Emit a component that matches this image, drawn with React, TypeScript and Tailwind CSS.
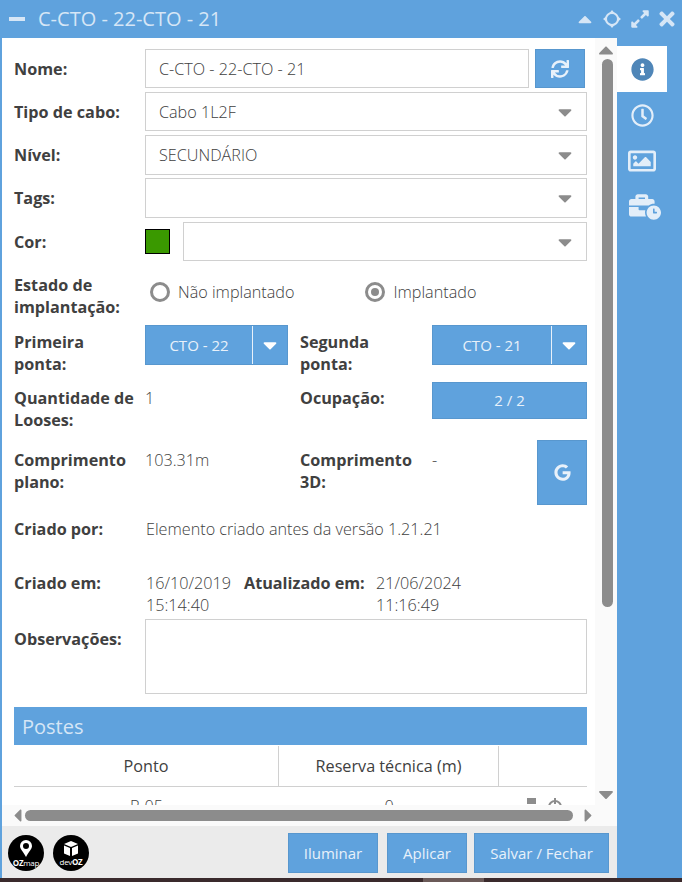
import React from "react";
import { FaBusinessTime, FaCaretDown, FaCaretLeft, FaCaretRight, FaCaretUp, FaExpandAlt, FaGoogle, FaInfoCircle, FaRegClock, FaRegImage, FaSync, FaTimes } from "react-icons/fa";

const Label = ({ children, className = "" }: { children: React.ReactNode; className?: string }) => (
  <div className={`text-[16.2px] leading-[22px] font-bold text-[#404040] ${className}`}>{children}</div>
);

const Value = ({ children, className = "" }: { children: React.ReactNode; className?: string }) => (
  <div className={`text-[16.2px] leading-[22px] font-light text-[#404040] ${className}`}>{children}</div>
);

const Field = ({ value, select, className = "" }: { value?: string; select?: boolean; className?: string }) => (
  <div className={`flex items-center border border-[#d0d0d0] pl-[13px] pr-[13px] ${className}`}>
    <span className="flex-1 pt-[1px] text-[16.2px] font-light text-[#404040]">{value}</span>
    {select && <FaCaretDown className="mr-[-3px] text-[22px] text-[#8c8c8c]" />}
  </div>
);

const SplitButton = ({ text, main, className = "" }: { text: string; main: string; className?: string }) => (
  <div className={`flex h-[40px] items-center border border-[#5897ce] bg-[#5fa2dd] text-[15px] text-[#e8f1fa] ${className}`}>
    <div className={`flex h-[38px] items-center justify-center border-r border-[#e8f1fa] ${main}`}>{text}</div>
    <div className="flex flex-1 items-center justify-center">
      <FaCaretDown className="text-[22px] text-white" />
    </div>
  </div>
);

const Radio = ({ label, checked, className = "" }: { label: string; checked?: boolean; className?: string }) => (
  <div className={`flex items-center gap-[8px] ${className}`}>
    <div className="flex h-[20px] w-[20px] items-center justify-center rounded-full border-[3px] border-[#8c8c8c]">
      {checked && <div className="h-[8px] w-[8px] rounded-full bg-[#8c8c8c]" />}
    </div>
    <span className="text-[16.2px] font-light text-[#404040]">{label}</span>
  </div>
);

const MoveIcon = () => (
  <svg viewBox="0 0 18 18" className="h-[18px] w-[18px]" fill="#d6e6f6">
    <circle cx="9" cy="9" r="6" fill="none" stroke="#d6e6f6" strokeWidth="2" />
    <path d="M9 0l2.500 3h-5zM9 18l2.500-3h-5zM0 9l3-2.500v5zM18 9l-3-2.500v5z" />
  </svg>
);

const Logo = ({ children, caption }: { children: React.ReactNode; caption: React.ReactNode }) => (
  <div className="flex h-[36px] w-[36px] flex-col items-center justify-center rounded-full bg-black text-white">
    {children}
    <span className="text-[8px] leading-[9px] tracking-[-0.3px]">{caption}</span>
  </div>
);

export default function App() {
  return (
    <div className="flex h-[882px] w-[682px] flex-col overflow-hidden bg-[#5fa2dd] font-['Open_Sans',sans-serif]">
      {/* title bar */}
      <div className="flex h-[38px] shrink-0 items-center pl-[9px] pr-[4px] text-[#d6e6f6]">
        <div className="h-[4px] w-[16px] bg-[#d6e6f6]" />
        <span className="ml-[13px] flex-1 text-[20px] font-normal">C-CTO - 22-CTO - 21</span>
        <FaCaretUp className="mr-[7px] text-[22px]" />
        <MoveIcon />
        <FaExpandAlt className="ml-[9px] text-[20px]" />
        <FaTimes className="ml-[6px] text-[22px]" />
      </div>

      <div className="flex min-h-0 flex-1">
        <div className="ml-[2px] flex w-[615px] flex-col">
          <div className="flex min-h-0 flex-1 bg-white">
            <div className="flex w-[593px] flex-col">
              <div className="h-[767px] overflow-hidden pl-[12px] pr-[8px] pt-[11px]">
                <div className="flex h-[39px] items-center">
                  <Label className="w-[131px]">Nome:</Label>
                  <Field value="C-CTO - 22-CTO - 21" className="h-[39px] w-[384px]" />
                  <div className="ml-[6px] flex h-[39px] w-[50px] items-center justify-center border border-[#5897ce] bg-[#5fa2dd]">
                    <FaSync className="text-[18px] text-[#e8f1fa]" />
                  </div>
                </div>
                <div className="mt-[4px] flex h-[39px] items-center">
                  <Label className="w-[131px]">Tipo de cabo:</Label>
                  <Field value="Cabo 1L2F" select className="h-[39px] flex-1" />
                </div>
                <div className="mt-[4px] flex h-[40px] items-center">
                  <Label className="w-[131px]">Nível:</Label>
                  <Field value="SECUNDÁRIO" select className="h-[40px] flex-1" />
                </div>
                <div className="mt-[3px] flex h-[40px] items-center">
                  <Label className="w-[131px]">Tags:</Label>
                  <Field select className="h-[40px] flex-1" />
                </div>
                <div className="mt-[4px] flex h-[39px] items-center">
                  <Label className="w-[131px]">Cor:</Label>
                  <div className="h-[25px] w-[25px] border border-black bg-[#3a9900]" />
                  <Field select className="ml-[13px] h-[39px] flex-1" />
                </div>

                <div className="mt-[13px] flex h-[44px]">
                  <Label className="w-[136px]">Estado de implantação:</Label>
                  <Radio label="Não implantado" className="h-[36px]" />
                  <Radio label="Implantado" checked className="ml-[71px] h-[36px]" />
                </div>

                <div className="mt-[7px] flex h-[46px]">
                  <Label className="w-[131px] pt-[6px]">Primeira<br />ponta:</Label>
                  <SplitButton text="CTO - 22" main="w-[107px]" className="w-[143px]" />
                  <Label className="ml-[12px] w-[132px] pt-[6px]">Segunda<br />ponta:</Label>
                  <SplitButton text="CTO - 21" main="w-[119px]" className="w-[155px]" />
                </div>

                <div className="mt-[11px] flex h-[48px]">
                  <Label className="w-[131px] pt-[5px]">Quantidade de Looses:</Label>
                  <Value className="w-[155px] pt-[5px]">1</Value>
                  <Label className="w-[132px] pt-[5px]">Ocupação:</Label>
                  <div className="flex h-[37px] w-[155px] items-center justify-center border border-[#5897ce] bg-[#5fa2dd] text-[15px] text-[#e8f1fa]">2 / 2</div>
                </div>

                <div className="mt-[10px] flex h-[65px]">
                  <div className="flex w-[286px] pt-[9px]">
                    <Label className="w-[131px]">Comprimento plano:</Label>
                    <Value>103.31m</Value>
                  </div>
                  <div className="flex w-[237px] pt-[9px]">
                    <Label className="w-[132px]">Comprimento<br />3D:</Label>
                    <Value>-</Value>
                  </div>
                  <div className="flex h-[65px] w-[50px] items-center justify-center border border-[#5897ce] bg-[#5fa2dd]">
                    <FaGoogle className="text-[17px] text-[#e8f1fa]" />
                  </div>
                </div>

                <div className="mt-[13px] flex h-[22px]">
                  <Label className="w-[132px]">Criado por:</Label>
                  <Value>Elemento criado antes da versão 1.21.21</Value>
                </div>

                <div className="mt-[32px] flex h-[44px]">
                  <Label className="w-[132px]">Criado em:</Label>
                  <Value className="w-[98px]">16/10/2019 15:14:40</Value>
                  <Label className="w-[132px]">Atualizado em:</Label>
                  <Value className="w-[98px]">21/06/2024 11:16:49</Value>
                </div>

                <div className="mt-[3px] flex h-[75px]">
                  <Label className="w-[131px] pt-[9px]">Observações:</Label>
                  <div className="flex-1 border border-[#d0d0d0]" />
                </div>

                <div className="mt-[13px] flex h-[38px] items-center bg-[#5fa2dd] pl-[8px] pt-[1px] text-[20px] text-[#d6e6f6]">Postes</div>
                <div className="flex h-[42px] border-b border-[#d0d0d0] pt-[1px] text-[16.2px] text-[#404040]">
                  <div className="flex w-[265px] items-center justify-center border-r border-[#d0d0d0]">Ponto</div>
                  <div className="flex w-[220px] items-center justify-center border-r border-[#d0d0d0]">Reserva técnica (m)</div>
                </div>
                <div className="flex h-[40px] items-start pt-[7px] text-[16.2px] font-light text-[#404040]">
                  <div className="w-[265px] text-center">P-05</div>
                  <div className="w-[220px] text-center">0</div>
                  <svg viewBox="0 0 36 14" className="ml-[28px] mt-[4px] h-[14px] w-[36px]" fill="none" stroke="#8c8c8c">
                    <path d="M1 0h7v5H1zM0 10h9" fill="#8c8c8c" strokeWidth="2" />
                    <circle cx="28" cy="9" r="6" strokeWidth="2" />
                    <path d="M28 0v6" strokeWidth="2" />
                  </svg>
                </div>
              </div>
              {/* horizontal scrollbar */}
              <div className="flex h-[21px] items-center bg-[#fafafa] pl-[5px] text-[#8c8c8c]">
                <FaCaretLeft className="shrink-0 text-[21px]" />
                <div className="ml-[-3px] h-[11px] w-[548px] shrink-0 rounded-full bg-[#8c8c8c]" />
                <FaCaretRight className="ml-[5px] shrink-0 text-[21px]" />
              </div>
            </div>
            {/* vertical scrollbar */}
            <div className="flex w-[22px] flex-col items-center bg-[#fafafa] text-[#8c8c8c]">
              <FaCaretUp className="text-[24px]" />
              <div className="ml-[3px] mt-[-3px] h-[548px] w-[11px] rounded-full bg-[#8c8c8c]" />
              <FaCaretDown className="mt-[175px] text-[24px]" />
            </div>
          </div>
          {/* footer */}
          <div className="flex h-[52px] shrink-0 items-center bg-[#ebebeb] pl-[6px] pr-[8px] pt-[2px]">
            <Logo caption={<><b>OZ</b>map</>}>
              <svg viewBox="0 0 14 18" className="h-[18px] w-[14px]">
                <path fillRule="evenodd" fill="#fff" d="M7 0a6 6 0 0 1 6 6c0 3-3 5-6 11C4 11 1 9 1 6a6 6 0 0 1 6-6zm0 3a3 3 0 1 0 0 6 3 3 0 0 0 0-6z" />
              </svg>
            </Logo>
            <div className="ml-[9px]">
              <Logo caption={<>dev<b>OZ</b></>}>
                <svg viewBox="0 0 16 16" className="h-[16px] w-[16px]">
                  <path fill="#fff" d="M8 0l7 3-7 3-7-3zM1 4.500l6 2.500v8l-6-2.500zM9 7l6-2.500v8L9 15z" />
                </svg>
              </Logo>
            </div>
            <div className="flex-1" />
            <button className="h-[40px] w-[90px] border border-[#5897ce] bg-[#5fa2dd] text-[15px] text-[#e8f1fa]">Iluminar</button>
            <button className="ml-[9px] h-[40px] w-[80px] border border-[#5897ce] bg-[#5fa2dd] text-[15px] text-[#e8f1fa]">Aplicar</button>
            <button className="ml-[7px] h-[40px] w-[135px] border border-[#5897ce] bg-[#5fa2dd] text-[15px] text-[#e8f1fa]">Salvar / Fechar</button>
          </div>
        </div>

        {/* side tabs */}
        <div className="flex w-[65px] flex-col pt-[8px]">
          <div className="flex h-[46px] w-[50px] items-center justify-center bg-white">
            <FaInfoCircle className="text-[23px] text-[#4f86b8]" />
          </div>
          <div className="flex h-[46px] w-[50px] items-center justify-center">
            <FaRegClock className="text-[23px] text-[#e3eef9]" />
          </div>
          <div className="flex h-[46px] w-[50px] items-center justify-center">
            <FaRegImage className="text-[28px] text-[#e3eef9]" />
          </div>
          <div className="flex h-[46px] w-[50px] items-center justify-center pl-[6px]">
            <FaBusinessTime className="text-[32px] text-[#e3eef9]" />
          </div>
        </div>
      </div>
      <div className="flex h-[4px] shrink-0 bg-[#3a2a2c]">
        <div className="ml-[423px] h-[4px] w-[61px] bg-[#6b5a58]" />
      </div>
    </div>
  );
}
